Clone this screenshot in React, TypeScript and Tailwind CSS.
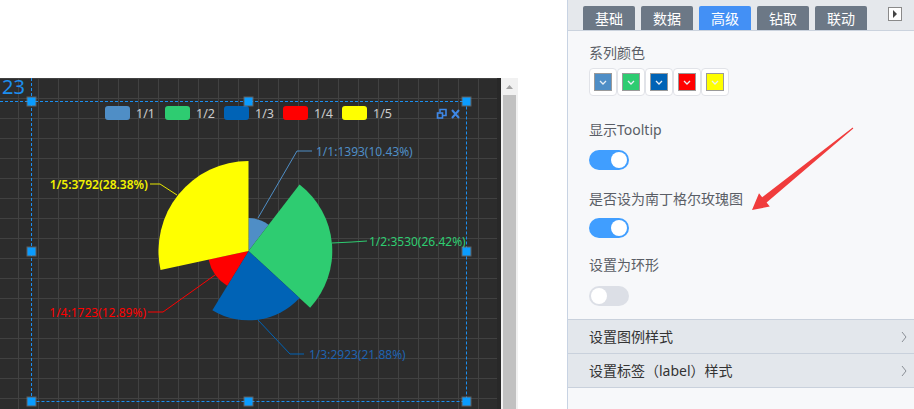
import React from "react";

const data = [
  { name: "1/1", value: 1393, pct: "10.43%", color: "#4f8ec6" },
  { name: "1/2", value: 3530, pct: "26.42%", color: "#2ecc71" },
  { name: "1/3", value: 2923, pct: "21.88%", color: "#0063b6" },
  { name: "1/4", value: 1723, pct: "12.89%", color: "#ff0000" },
  { name: "1/5", value: 3792, pct: "28.38%", color: "#ffff00" },
];

const FONT = '"Noto Sans", "Noto Sans CJK SC", sans-serif';

function Chart() {
  const cx = 248.5;
  const cy = 173;
  const total = 13361;
  let acc = 0;
  const slices = data.map((d) => {
    const r = 33 + (d.value - 1393) * 0.02376;
    const a0 = acc;
    const a1 = acc + (d.value / total) * 2 * Math.PI;
    acc = a1;
    const px = (ang: number) => cx + r * Math.sin(ang);
    const py = (ang: number) => cy - r * Math.cos(ang);
    const large = a1 - a0 > Math.PI ? 1 : 0;
    return (
      <path
        key={d.name}
        d={`M${cx} ${cy} L${px(a0)} ${py(a0)} A${r} ${r} 0 ${large} 1 ${px(a1)} ${py(a1)} Z`}
        fill={d.color}
      />
    );
  });

  const legendX = [105, 165, 224, 283, 342];
  const handles: [number, number][] = [
    [31.5, 23.5],
    [248.5, 23.5],
    [466.5, 23.5],
    [31.5, 173.5],
    [466.5, 173.5],
    [31.5, 323.5],
    [248.5, 323.5],
    [466.5, 323.5],
  ];

  return (
    <svg width="501" height="331" className="block" style={{ fontFamily: FONT }}>
      <defs>
        <pattern id="grid" width="20" height="20" patternUnits="userSpaceOnUse" x="18" y="0">
          <rect x="0" y="0" width="1" height="20" fill="#414141" />
          <rect x="0" y="0" width="20" height="1" fill="#414141" />
        </pattern>
      </defs>
      <rect x="0" y="0" width="501" height="331" fill="#2c2c2c" />
      <rect x="0" y="0" width="497" height="331" fill="url(#grid)" />
      <rect x="497" y="0" width="4" height="331" fill="#282828" />

      <text x="2" y="16" fontSize="20" fill="#1c8ef0">23</text>

      {/* legend */}
      {data.map((d, i) => (
        <g key={d.name}>
          <rect x={legendX[i]} y="28" width="25" height="14" rx="3" fill={d.color} />
          <text x={legendX[i] + 31} y="35" fontSize="12.5" fill="#cccccc" dominantBaseline="central">
            {d.name}
          </text>
        </g>
      ))}

      {/* toolbox icons */}
      <g stroke="#3f88e6" strokeWidth="1.6" fill="none">
        <rect x="437.5" y="35" width="5" height="5" />
        <path d="M440 34.5 V31.5 H446 V37.5 H443" />
        <path d="M452 32 L459 40 M459 32 L452 40" strokeWidth="2" />
      </g>

      {/* pie */}
      {slices}

      {/* label lines */}
      <g fill="none" strokeWidth="1">
        <polyline points="258,140 297,73 312,73" stroke="#4f8ec6" />
        <polyline points="332,165 352,164 367,163" stroke="#2ecc71" />
        <polyline points="258,242 290,276 304,276" stroke="#0063b6" />
        <polyline points="215,197 163,234 148,234" stroke="#ff0000" />
        <polyline points="177,117 160,106 150,106" stroke="#e8e800" />
      </g>
      <g fontSize="12" dominantBaseline="central">
        <text x="316" y="73" fill="#4f8ec6">1/1:1393(10.43%)</text>
        <text x="369" y="163" fill="#2ecc71">1/2:3530(26.42%)</text>
        <text x="309" y="276" fill="#1f63b0">1/3:2923(21.88%)</text>
        <text x="146" y="234" fill="#ff0000" textAnchor="end">1/4:1723(12.89%)</text>
        <text x="148" y="106" fill="#f2f200" textAnchor="end" fontWeight="600">1/5:3792(28.38%)</text>
      </g>

      {/* selection box */}
      <g stroke="#1b8ff0" strokeWidth="1" strokeDasharray="3 2" fill="none">
        <line x1="0" y1="23.5" x2="466.5" y2="23.5" />
        <line x1="31.5" y1="0" x2="31.5" y2="323.5" />
        <line x1="466.5" y1="23.5" x2="466.5" y2="323.5" />
        <line x1="31.5" y1="323.5" x2="466.5" y2="323.5" />
      </g>
      {handles.map(([x, y], i) => (
        <g key={i}>
          <rect x={x - 5} y={y - 5} width="10" height="10" fill="#8a8a8a" opacity="0.55" />
          <rect x={x - 4} y={y - 4} width="8" height="8" fill="#0a9cff" />
        </g>
      ))}
    </svg>
  );
}

function Swatch({ color }: { color: string }) {
  return (
    <div className="w-[28px] h-[28px] rounded-[4px] border border-[#e1e3e8] bg-white flex items-center justify-center">
      <div
        className="w-[18px] h-[18px] border border-[#9a9a9a] flex items-center justify-center"
        style={{ backgroundColor: color }}
      >
        <svg width="8" height="5" viewBox="0 0 8 5">
          <polyline points="1,1 4,4 7,1" fill="none" stroke="#e8eef5" strokeWidth="1.3" />
        </svg>
      </div>
    </div>
  );
}

function Toggle({ on }: { on: boolean }) {
  return (
    <div
      className={`w-[40px] h-[20px] rounded-full flex items-center px-[2px] ${
        on ? "bg-[#409eff] justify-end" : "bg-[#dcdfe6] justify-start"
      }`}
    >
      <div className="w-[16px] h-[16px] rounded-full bg-white" />
    </div>
  );
}

function Row({ label, last }: { label: string; last?: boolean }) {
  return (
    <div
      className={`h-[34px] flex items-center justify-between pl-[21px] pr-[6px] bg-[#e3e7ec] border-t border-[#c9d1dc] ${
        last ? "h-[35px] border-b" : ""
      }`}
    >
      <span className="text-[14px] text-[#333]">{label}</span>
      <svg width="8" height="12" viewBox="0 0 8 12">
        <polyline points="2,1 6,6 2,11" fill="none" stroke="#8a8f96" strokeWidth="1" />
      </svg>
    </div>
  );
}

export default function App() {
  const tabs = ["基础", "数据", "高级", "钻取", "联动"];
  return (
    <div className="flex w-[914px] h-[409px] overflow-hidden bg-white" style={{ fontFamily: FONT }}>
      <div className="w-[567px] shrink-0 flex flex-col">
        <div className="h-[78px] shrink-0" />
        <div className="flex h-[331px]">
          <div className="w-[501px] h-full relative overflow-hidden">
            <Chart />
          </div>
          <div className="w-[17px] h-full bg-[#f1f1f1] flex flex-col items-center pt-[7px]">
            <svg width="7" height="4" viewBox="0 0 7 4" className="block">
              <polygon points="3.5,0 7,4 0,4" fill="#a3a3a3" />
            </svg>
            <div className="mt-[6px] w-[13px] flex-1 bg-[#c1c1c1]" />
          </div>
        </div>
      </div>

      <div className="relative w-[347px] shrink-0 border-l border-[#c8d3e3] bg-[#f7f8fa] flex flex-col">
        <div className="h-[31px] shrink-0 bg-[#e5e8ec] border-b border-[#cbd3de] flex items-end pl-[15px] gap-[6px]">
          {tabs.map((t) => (
            <div
              key={t}
              className={`w-[52px] h-[24px] rounded-t-[2px] flex items-center justify-center text-[14px] text-white ${
                t === "高级" ? "bg-[#4390f5]" : "bg-[#6c7886]"
              }`}
            >
              {t}
            </div>
          ))}
          <div className="ml-auto mr-[12px] self-start mt-[7px] w-[14px] h-[14px] border border-[#8a8a8a] bg-white flex items-center justify-center">
            <svg width="6" height="8" viewBox="0 0 6 8">
              <polygon points="1,0 5,4 1,8" fill="#444" />
            </svg>
          </div>
        </div>

        <div className="pl-[21px] flex flex-col text-[14px] text-[#5a5e66] leading-[20px]">
          <div className="mt-[12px]">系列颜色</div>
          <div className="mt-[5px] flex">
            {data.map((d) => (
              <Swatch key={d.name} color={d.color} />
            ))}
          </div>
          <div className="mt-[24px]">显示Tooltip</div>
          <div className="mt-[10px]">
            <Toggle on />
          </div>
          <div className="mt-[19px]">是否设为南丁格尔玫瑰图</div>
          <div className="mt-[9px]">
            <Toggle on />
          </div>
          <div className="mt-[17px]">设置为环形</div>
          <div className="mt-[11px]">
            <Toggle on={false} />
          </div>
        </div>

        <div className="mt-[13px] flex flex-col">
          <Row label="设置图例样式" />
          <Row label="设置标签（label）样式" last />
        </div>

        <svg className="absolute inset-0 pointer-events-none" width="346" height="409">
          <polygon
            points="285.3,128.4 198.6,202.6 201.8,206.5 184,210 191,193.3 194.2,197.2 284.7,127.6"
            fill="#f03c3c"
          />
        </svg>
      </div>
    </div>
  );
}
